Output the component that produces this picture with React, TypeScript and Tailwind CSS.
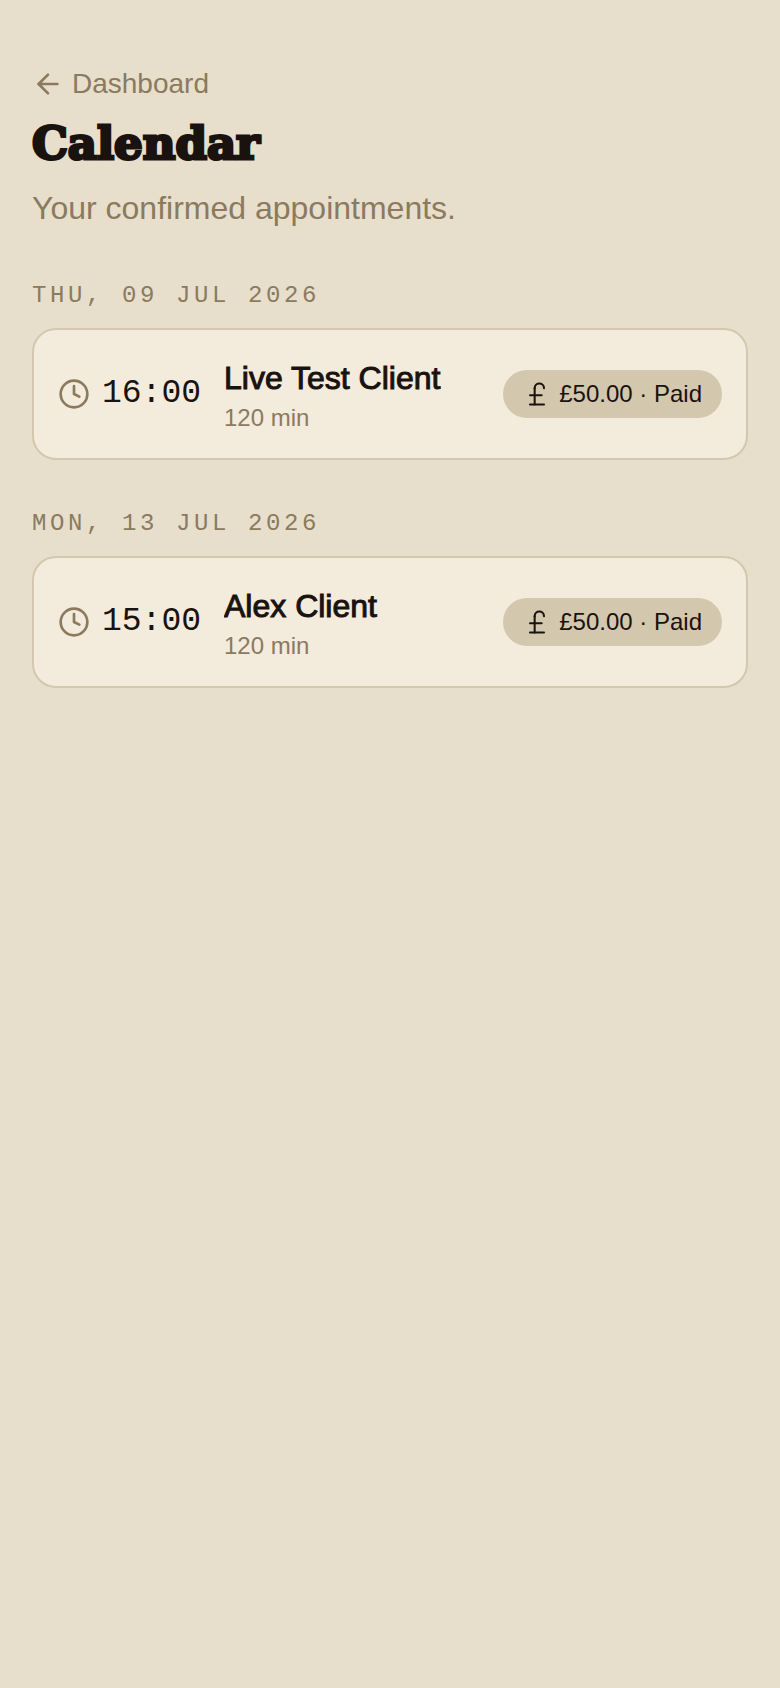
import { ArrowLeft, Clock, PoundSterling } from 'lucide-react';

interface Appointment {
  time: string;
  client: string;
  duration: string;
  payment: string;
}

interface Day {
  label: string;
  appointments: Appointment[];
}

const days: Day[] = [
  {
    label: 'Thu, 09 Jul 2026',
    appointments: [{ time: '16:00', client: 'Live Test Client', duration: '120 min', payment: '£50.00 · Paid' }]
  },
  {
    label: 'Mon, 13 Jul 2026',
    appointments: [{ time: '15:00', client: 'Alex Client', duration: '120 min', payment: '£50.00 · Paid' }]
  }
];

function AppointmentCard({ appointment }: { appointment: Appointment }) {
  return (
    <li className="flex items-center gap-6 rounded-3xl border-2 border-[#d3c7ad] bg-[#f3ebdb] p-6">
      <div className="flex w-[142px] shrink-0 items-center gap-3">
        <Clock className="size-8 shrink-0 text-[#8b7a5e]" />
        <time className="font-['Liberation_Mono',monospace] text-[33px] leading-10">{appointment.time}</time>
      </div>
      <div className="min-w-0 flex-1">
        <p className="truncate text-[32px] leading-12 [-webkit-text-stroke:1px_#1a120f]">{appointment.client}</p>
        <p className="text-2xl text-[#8b7a5e]">{appointment.duration}</p>
      </div>
      <span className="flex h-12 shrink-0 items-center gap-2 rounded-full bg-[#d3c7ad] px-5 text-2xl">
        <PoundSterling className="size-7" strokeWidth={1.75} />
        {appointment.payment}
      </span>
    </li>
  );
}

export default function App() {
  return (
    <div className="min-h-screen bg-[#e7dfcc] px-8 pt-16 font-['Liberation_Sans',sans-serif] text-[#1a120f]">
      <header>
        <a href="#dashboard" className="inline-flex items-center gap-2 align-top text-[28px] leading-10 text-[#8b7a5e]">
          <ArrowLeft className="size-8" />
          Dashboard
        </a>
        <h1 className="font-['DejaVu_Serif',serif] text-[45px] leading-[80px] font-black [-webkit-text-stroke:3px_#1a120f]">
          Calendar
        </h1>
        <p className="text-[32px] leading-12 text-[#8b7a5e]">Your confirmed appointments.</p>
      </header>

      <main className="mt-12 space-y-12">
        {days.map((day) => (
          <section key={day.label}>
            <h2 className="mb-4 font-['Liberation_Mono',monospace] text-2xl tracking-[0.15em] text-[#8b7a5e] uppercase">
              {day.label}
            </h2>
            <ul className="space-y-4">
              {day.appointments.map((appointment) => (
                <AppointmentCard key={appointment.time} appointment={appointment} />
              ))}
            </ul>
          </section>
        ))}
      </main>
    </div>
  );
}
